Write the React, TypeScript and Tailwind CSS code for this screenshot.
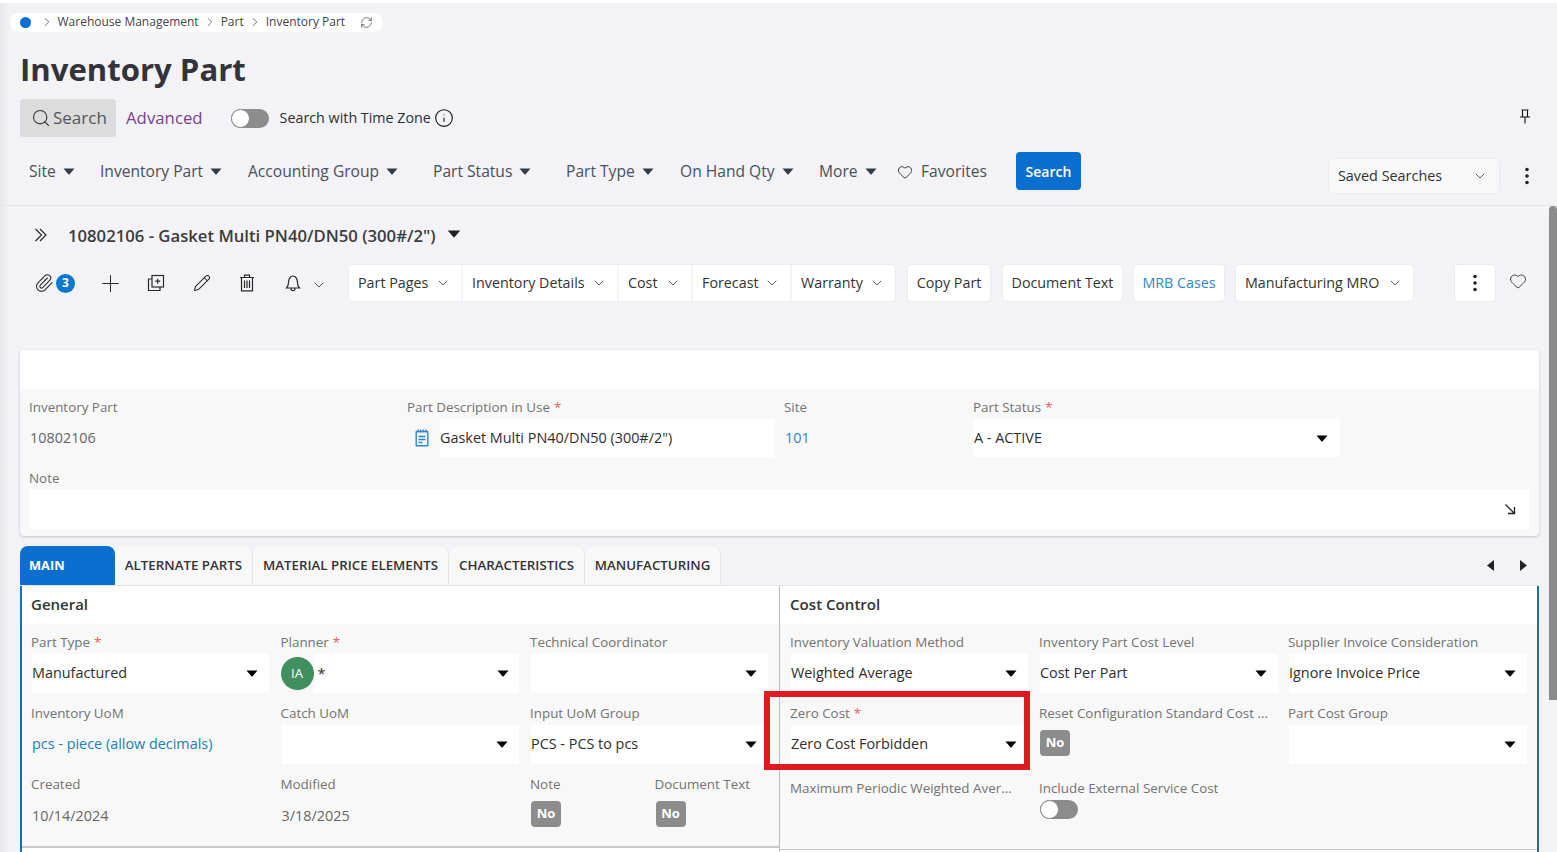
import { ChevronDown, ChevronRight, Heart, Info, Paperclip, Pencil, Plus, RefreshCw, Search } from 'lucide-react';
import type { ReactNode } from 'react';

function Caret({ className = 'text-black' }: { className?: string }) {
  return (
    <svg width="12" height="7" viewBox="0 0 12 7" className={className}>
      <path d="M0.5 0.5h11L6.6 6.2a.8.8 0 0 1-1.2 0z" fill="currentColor" />
    </svg>
  );
}

function Kebab() {
  return (
    <svg width="4" height="18" viewBox="0 0 4 18" className="text-[#222]">
      <circle cx="2" cy="2.5" r="1.8" fill="currentColor" />
      <circle cx="2" cy="9" r="1.8" fill="currentColor" />
      <circle cx="2" cy="15.5" r="1.8" fill="currentColor" />
    </svg>
  );
}

function Toggle() {
  return (
    <div className="w-[38px] h-[19px] rounded-full bg-[#8c8c8c] flex items-center">
      <div className="w-[19px] h-[19px] rounded-full bg-white border border-[#8c8c8c]" />
    </div>
  );
}

function Label({ text, required, className = '' }: { text: string; required?: boolean; className?: string }) {
  return (
    <div className={`h-[21px] text-[13.4px] leading-[18px] text-[#727272] whitespace-nowrap ${className}`}>
      {text}
      {required && <span className="text-[#e0605c] ml-[4px]">*</span>}
    </div>
  );
}

function SelectBox({ value, children }: { value?: string; children?: ReactNode }) {
  return (
    <div className="h-[39px] ml-[1px] flex-1 bg-white flex items-center justify-between pr-[11px] text-[14.4px] text-[#2e2e2e] whitespace-nowrap">
      <span className="pb-[1px]">{value}</span>
      {children}
      <Caret />
    </div>
  );
}

function SelectField({ label, required, value }: { label: string; required?: boolean; value?: string }) {
  return (
    <div className="flex flex-col">
      <Label text={label} required={required} />
      <div className="flex">
        <SelectBox value={value} />
      </div>
    </div>
  );
}

function NoBadge() {
  return (
    <div className="w-[30px] h-[26px] ml-[1px] rounded-[4px] bg-[#8c8c8c] text-white text-[13px] font-bold flex items-center justify-center">
      No
    </div>
  );
}

const filters = [
  { label: 'Site', w: 'w-[71px]' },
  { label: 'Inventory Part', w: 'w-[148px]' },
  { label: 'Accounting Group', w: 'w-[185px]' },
  { label: 'Part Status', w: 'w-[133px]' },
  { label: 'Part Type', w: 'w-[114px]' },
  { label: 'On Hand Qty', w: 'w-[139px]' },
  { label: 'More', w: 'w-[73px]' },
];

const pageMenus = [
  { label: 'Part Pages', w: 'w-[114px]' },
  { label: 'Inventory Details', w: 'w-[156px]' },
  { label: 'Cost', w: 'w-[74px]' },
  { label: 'Forecast', w: 'w-[99px]' },
  { label: 'Warranty', w: 'w-[103px]' },
];

const tabs = [
  { label: 'ALTERNATE PARTS', w: 'w-[138px]' },
  { label: 'MATERIAL PRICE ELEMENTS', w: 'w-[196px]' },
  { label: 'CHARACTERISTICS', w: 'w-[136px]' },
  { label: 'MANUFACTURING', w: 'w-[136px]' },
];

export default function App() {
  return (
    <div className="relative w-[1557px] h-[852px] overflow-hidden bg-[#f3f2f6] font-['Open_Sans',sans-serif] text-[#333]">
      <div className="h-[3px] bg-white" />

      {/* page header */}
      <div className="h-[203px] pt-[10px] border-b border-[#e4e4e6]">
        <div className="ml-[10px] w-[373px] h-[19px] rounded-full bg-white flex items-center text-[12px] text-[#444] pb-[1px]">
          <div className="ml-[10px] w-[11px] h-[11px] rounded-full bg-[#0b6fd0]" />
          <ChevronRight size={14} strokeWidth={1.3} className="ml-[9px]" />
          <span className="ml-[3.5px]">Warehouse Management</span>
          <ChevronRight size={14} strokeWidth={1.3} className="ml-[4px]" />
          <span className="ml-[4px]">Part</span>
          <ChevronRight size={14} strokeWidth={1.3} className="ml-[4px]" />
          <span className="ml-[4px]">Inventory Part</span>
          <RefreshCw size={13} strokeWidth={1.3} className="ml-[15px]" />
        </div>

        <div className="h-[67px] pl-[20px] pt-[8px] flex items-center">
          <h1 className="text-[31.1px] leading-none font-bold text-[#33333a]">Inventory Part</h1>
        </div>

        <div className="h-[38px] pl-[20px] pr-[26px] flex items-center">
          <div className="w-[96px] h-[38px] rounded-[3px] bg-[#dcdcdd] flex items-center pl-[11px] text-[17px] text-[#555]">
            <Search size={20} strokeWidth={1.3} className="mr-[2px] text-[#333]" />
            Search
          </div>
          <span className="ml-[10px] text-[16.8px] text-[#7b3f8c]">Advanced</span>
          <div className="ml-[28px]">
            <Toggle />
          </div>
          <span className="ml-[11px] text-[14.3px] text-[#2e2e2e] pb-[1px]">Search with Time Zone</span>
          <Info size={20} strokeWidth={1.3} className="ml-[3px] text-[#111]" />
          <svg width="12" height="15" viewBox="0 0 12 15" fill="none" stroke="#111" strokeWidth="1.1" className="ml-auto mb-[4px]">
            <path d="M2.500 1h7M3.500 1v6.500M8.500 1v6.500M1 8h10M6 8v6.500" />
          </svg>
        </div>

        <div className="mt-[15px] pl-[29px] flex items-start">
          <div className="h-[38px] pt-[2px] flex items-center text-[15.6px] text-[#49505a]">
            {filters.map((f) => (
              <div key={f.label} className={`${f.w} flex items-center gap-[7px] whitespace-nowrap`}>
                {f.label}
                <Caret className="text-[#333c46]" />
              </div>
            ))}
            <Heart size={16} strokeWidth={1.4} className="ml-[5px] mr-[8px] text-[#333]" />
            <span>Favorites</span>
          </div>
          <div className="ml-[29px] w-[65px] h-[38px] rounded-[4px] bg-[#0b6fd0] text-white text-[14px] font-semibold flex items-center justify-center">
            Search
          </div>
          <div className="ml-[247px] mt-[6px] w-[172px] h-[36px] rounded-[4px] bg-[#f8f8f9] border border-[#ececee] flex items-center justify-between pl-[9px] pr-[11px] text-[14.4px] text-[#333]">
            Saved Searches
            <ChevronDown size={16} strokeWidth={1.2} />
          </div>
          <div className="ml-[25px] mt-[15px]">
            <Kebab />
          </div>
        </div>
      </div>

      {/* record title */}
      <div className="h-[58px] pl-[34px] pt-[1px] flex items-center">
        <svg width="14" height="14" viewBox="0 0 14 14" fill="none" stroke="#222" strokeWidth="1.1" className="mb-[1px]">
          <path d="M1.500 1l6 6-6 6M6 1l6 6-6 6" />
        </svg>
        <span className="ml-[20px] text-[16.7px] font-semibold text-[#3c3c40]">10802106 - Gasket Multi PN40/DN50 (300#/2")</span>
        <Caret className="ml-[11px] mb-[3px] text-[#222] w-[14px] h-[8px]" />
      </div>

      {/* toolbar */}
      <div className="h-[38px] flex items-center text-[14.3px] text-[#333]">
        <div className="w-[348px] h-full flex items-center pl-[34px] text-[#2a2a2a]">
          <Paperclip size={20} strokeWidth={1.3} />
          <div className="ml-[2px] w-[19px] h-[19px] rounded-full bg-[#0b78d0] text-white text-[12px] font-bold flex items-center justify-center">3</div>
          <Plus size={27} strokeWidth={0.9} className="ml-[21.5px]" />
          <svg width="18" height="18" viewBox="0 0 18 18" fill="none" stroke="currentColor" strokeWidth="1.2" className="ml-[23.5px]">
            <rect x="5" y="1.500" width="11.500" height="11.500" />
            <path d="M5 5H1.500v11.500H13V13M10.700 4.700v5.100M8.200 7.200h5" />
          </svg>
          <Pencil size={18} strokeWidth={1.4} className="ml-[28px]" />
          <svg width="16" height="18" viewBox="0 0 16 18" fill="none" stroke="currentColor" strokeWidth="1.2" className="ml-[28px]">
            <path d="M1 3.500h14M5.500 3.500V1.200h5v2.300M2.500 3.500v13.300h11V3.500M5.500 6.500v7.500M8 6.500v7.500M10.500 6.500v7.500" />
          </svg>
          <svg width="16" height="18" viewBox="0 0 16 18" fill="none" stroke="currentColor" strokeWidth="1.2" className="ml-[30px]">
            <path d="M1.500 14h13c-1.500-1.500-2-2.500-2-5.500 0-3-1.600-6.500-4.500-6.500S3.500 5.500 3.500 8.500c0 3-.5 4-2 5.500zM6 14.500c0 1.500 1 2.200 2 2.200s2-.7 2-2.200" />
          </svg>
          <ChevronDown size={16} strokeWidth={1.2} className="ml-[10px] mt-[3px]" />
        </div>
        <div className="h-full flex rounded-[4px] bg-white border border-[#ececee]">
          {pageMenus.map((m) => (
            <div key={m.label} className={`${m.w} flex items-center justify-between pl-[9px] pr-[10px] border-r-2 border-[#f3f2f6] last:border-r-0 whitespace-nowrap`}>
              {m.label}
              <ChevronDown size={16} strokeWidth={1.2} />
            </div>
          ))}
        </div>
        <div className="ml-[11px] w-[84px] h-full rounded-[4px] bg-white border border-[#ececee] flex items-center justify-center">Copy Part</div>
        <div className="ml-[11px] w-[121px] h-full rounded-[4px] bg-white border border-[#ececee] flex items-center justify-center">Document Text</div>
        <div className="ml-[10px] w-[92px] h-full rounded-[4px] bg-white border border-[#ececee] flex items-center justify-center text-[#2f86c9]">MRB Cases</div>
        <div className="ml-[10px] w-[179px] h-full rounded-[4px] bg-white border border-[#ececee] flex items-center justify-between pl-[9px] pr-[10px]">
          Manufacturing MRO
          <ChevronDown size={16} strokeWidth={1.2} />
        </div>
        <div className="ml-[40px] w-[42px] h-full rounded-[4px] bg-white border border-[#ececee] flex items-center justify-center">
          <Kebab />
        </div>
        <Heart size={18} strokeWidth={1.2} className="ml-[13px] mb-[5px] text-[#333]" />
      </div>

      {/* record card */}
      <div className="mt-[48px] mx-[20px] w-[1519px] h-[186px] rounded-[4px] overflow-hidden bg-[#f8f8f8] shadow-[0_1px_3px_rgba(0,0,0,0.2)]">
        <div className="h-[39px] bg-white" />
        <div className="h-[68px] pt-[9px] flex">
          <div className="w-[387px] pl-[9px]">
            <Label text="Inventory Part" />
            <div className="h-[38px] flex items-center pl-[1px] pb-[1px] text-[14.4px] text-[#666]">10802106</div>
          </div>
          <div className="w-[377px]">
            <Label text="Part Description in Use" required />
            <div className="h-[38px] flex items-center">
              <svg width="14" height="18" viewBox="0 0 14 18" fill="none" stroke="#2f86c9" strokeWidth="1.4" className="ml-[8px]">
                <rect x="1.200" y="2.500" width="11.600" height="14.300" rx="0.500" />
                <path d="M3.200 .5v3M5.700 .5v3M8.200 .5v3M10.700 .5v3M3.500 7.500h7M3.500 10.500h7M3.500 13.500h4" />
              </svg>
              <div className="ml-[11px] w-[334px] h-[38px] bg-white flex items-center pb-[1px] text-[14.4px] text-[#2e2e2e]">Gasket Multi PN40/DN50 (300#/2")</div>
            </div>
          </div>
          <div className="w-[189px]">
            <Label text="Site" />
            <div className="h-[38px] flex items-center pl-[1px] pb-[1px] text-[14.4px] text-[#2f86c9]">101</div>
          </div>
          <div className="w-[367px]">
            <Label text="Part Status" required />
            <div className="h-[38px] bg-white flex items-center justify-between pl-[1px] pr-[12px] text-[14.4px] text-[#2e2e2e]">
              <span className="pb-[1px]">A - ACTIVE</span>
              <Caret />
            </div>
          </div>
        </div>
        <div className="mt-[12px] h-[20px] pl-[9px]">
          <Label text="Note" />
        </div>
        <div className="ml-[10px] w-[1499px] h-[40px] bg-white flex items-center justify-end pr-[13px]">
          <svg width="12" height="12" viewBox="0 0 12 12" fill="none" stroke="#222" strokeWidth="1.3">
            <path d="M1.500 1.500l9 9M10.500 4v6.500H4" />
          </svg>
        </div>
      </div>

      {/* tabs */}
      <div className="mt-[10px] mx-[20px] w-[1519px] h-[40px] flex border-b border-[#e4e4e6] text-[13.3px] font-semibold text-[#333]">
        <div className="w-[95px] rounded-t-[8px] bg-[#0b6fd0] text-white text-[12.8px] font-bold flex items-center pl-[9px]">MAIN</div>
        {tabs.map((t) => (
          <div key={t.label} className={`${t.w} rounded-t-[8px] bg-[#f8f8f8] border-r border-[#e6e6e8] flex items-center justify-center whitespace-nowrap`}>
            {t.label}
          </div>
        ))}
        <div className="ml-auto flex items-center gap-[26px] pr-[12px] text-[#222]">
          <svg width="7" height="11" viewBox="0 0 7 11"><path d="M7 0v11L0 5.500z" fill="currentColor" /></svg>
          <svg width="7" height="11" viewBox="0 0 7 11"><path d="M0 0v11L7 5.500z" fill="currentColor" /></svg>
        </div>
      </div>

      {/* tab panel */}
      <div className="mx-[20px] w-[1519px] h-[266px] flex bg-white border-l-[2px] border-r-[2px] border-l-[#0b6fd0] border-r-[#1a6fa8]">
        <div className="w-[758px] h-[266px] border-r border-[#bdbdbd] flex flex-col">
          <div className="h-[38px] pl-[9px] pb-[2px] flex items-center text-[15px] font-semibold text-[#333]">General</div>
          <div className="h-[224px] bg-[#f8f8f8] border-b-[2px] border-[#c8c8c8] pl-[9px] pt-[9px] grid grid-cols-[249.5px_249.5px_238px] auto-rows-[71px]">
            <div className="w-[238px]">
              <SelectField label="Part Type" required value="Manufactured" />
            </div>
            <div>
              <Label text="Planner" required />
              <div className="flex w-[238px] items-center">
                <div className="w-[33px] h-[33px] rounded-full bg-[#3f8f5f] text-white text-[13px] flex items-center justify-center">IA</div>
                <div className="h-[39px] flex-1 bg-white flex items-center justify-between pl-[4px] pr-[10px] text-[14.4px] text-[#2e2e2e]">
                  *
                  <Caret />
                </div>
              </div>
            </div>
            <SelectField label="Technical Coordinator" />

            <div>
              <Label text="Inventory UoM" />
              <div className="h-[39px] flex items-center pl-[1px] pb-[1px] text-[14.4px] text-[#1a7fb5]">pcs - piece (allow decimals)</div>
            </div>
            <div className="w-[238px]">
              <SelectField label="Catch UoM" />
            </div>
            <SelectField label="Input UoM Group" value="PCS - PCS to pcs" />

            <div>
              <Label text="Created" />
              <div className="h-[39px] pt-[1px] flex items-center pl-[1px] text-[14.4px] text-[#666]">10/14/2024</div>
            </div>
            <div>
              <Label text="Modified" />
              <div className="h-[39px] pt-[1px] flex items-center pl-[1px] text-[14.4px] text-[#666]">3/18/2025</div>
            </div>
            <div className="grid grid-cols-[124.5px_1fr]">
              <div>
                <Label text="Note" />
                <div className="mt-[5px]"><NoBadge /></div>
              </div>
              <div>
                <Label text="Document Text" />
                <div className="mt-[5px]"><NoBadge /></div>
              </div>
            </div>
          </div>
        </div>

        <div className="w-[757px] h-[264px] flex flex-col">
          <div className="h-[38px] pl-[10px] pb-[2px] flex items-center text-[15.1px] font-semibold text-[#333]">Cost Control</div>
          <div className="h-[227px] bg-[#f8f8f8] border-b border-[#c8c8c8] pl-[10px] pt-[9px] grid grid-cols-[249px_249px_239px] auto-rows-[71px]">
            <div className="w-[238px]"><SelectField label="Inventory Valuation Method" value="Weighted Average" /></div>
            <div className="w-[239px]"><SelectField label="Inventory Part Cost Level" value="Cost Per Part" /></div>
            <SelectField label="Supplier Invoice Consideration" value="Ignore Invoice Price" />

            <div className="w-[238px]"><SelectField label="Zero Cost" required value="Zero Cost Forbidden" /></div>
            <div>
              <Label text="Reset Configuration Standard Cost ..." />
              <div className="mt-[5px]"><NoBadge /></div>
            </div>
            <SelectField label="Part Cost Group" />

            <div className="pt-[4px]"><Label text="Maximum Periodic Weighted Aver..." /></div>
            <div className="pt-[4px]">
              <Label text="Include External Service Cost" />
              <div className="ml-[1px]"><Toggle /></div>
            </div>
          </div>
        </div>
      </div>

      {/* sidebar shadow along the left edge */}
      <div className="absolute left-0 top-[3px] bottom-0 w-[10px] bg-gradient-to-r from-[#e7e7e9] to-transparent" />

      {/* annotation drawn over the Zero Cost field */}
      <div className="absolute left-[764px] top-[691px] w-[266px] h-[79px] border-[6px] border-[#e01b1f]" />

      {/* overlay scrollbar */}
      <div className="absolute left-[1549px] top-[206px] w-[8px] h-[494px] rounded-t-[4px] bg-[#8a8a8a]" />
    </div>
  );
}
